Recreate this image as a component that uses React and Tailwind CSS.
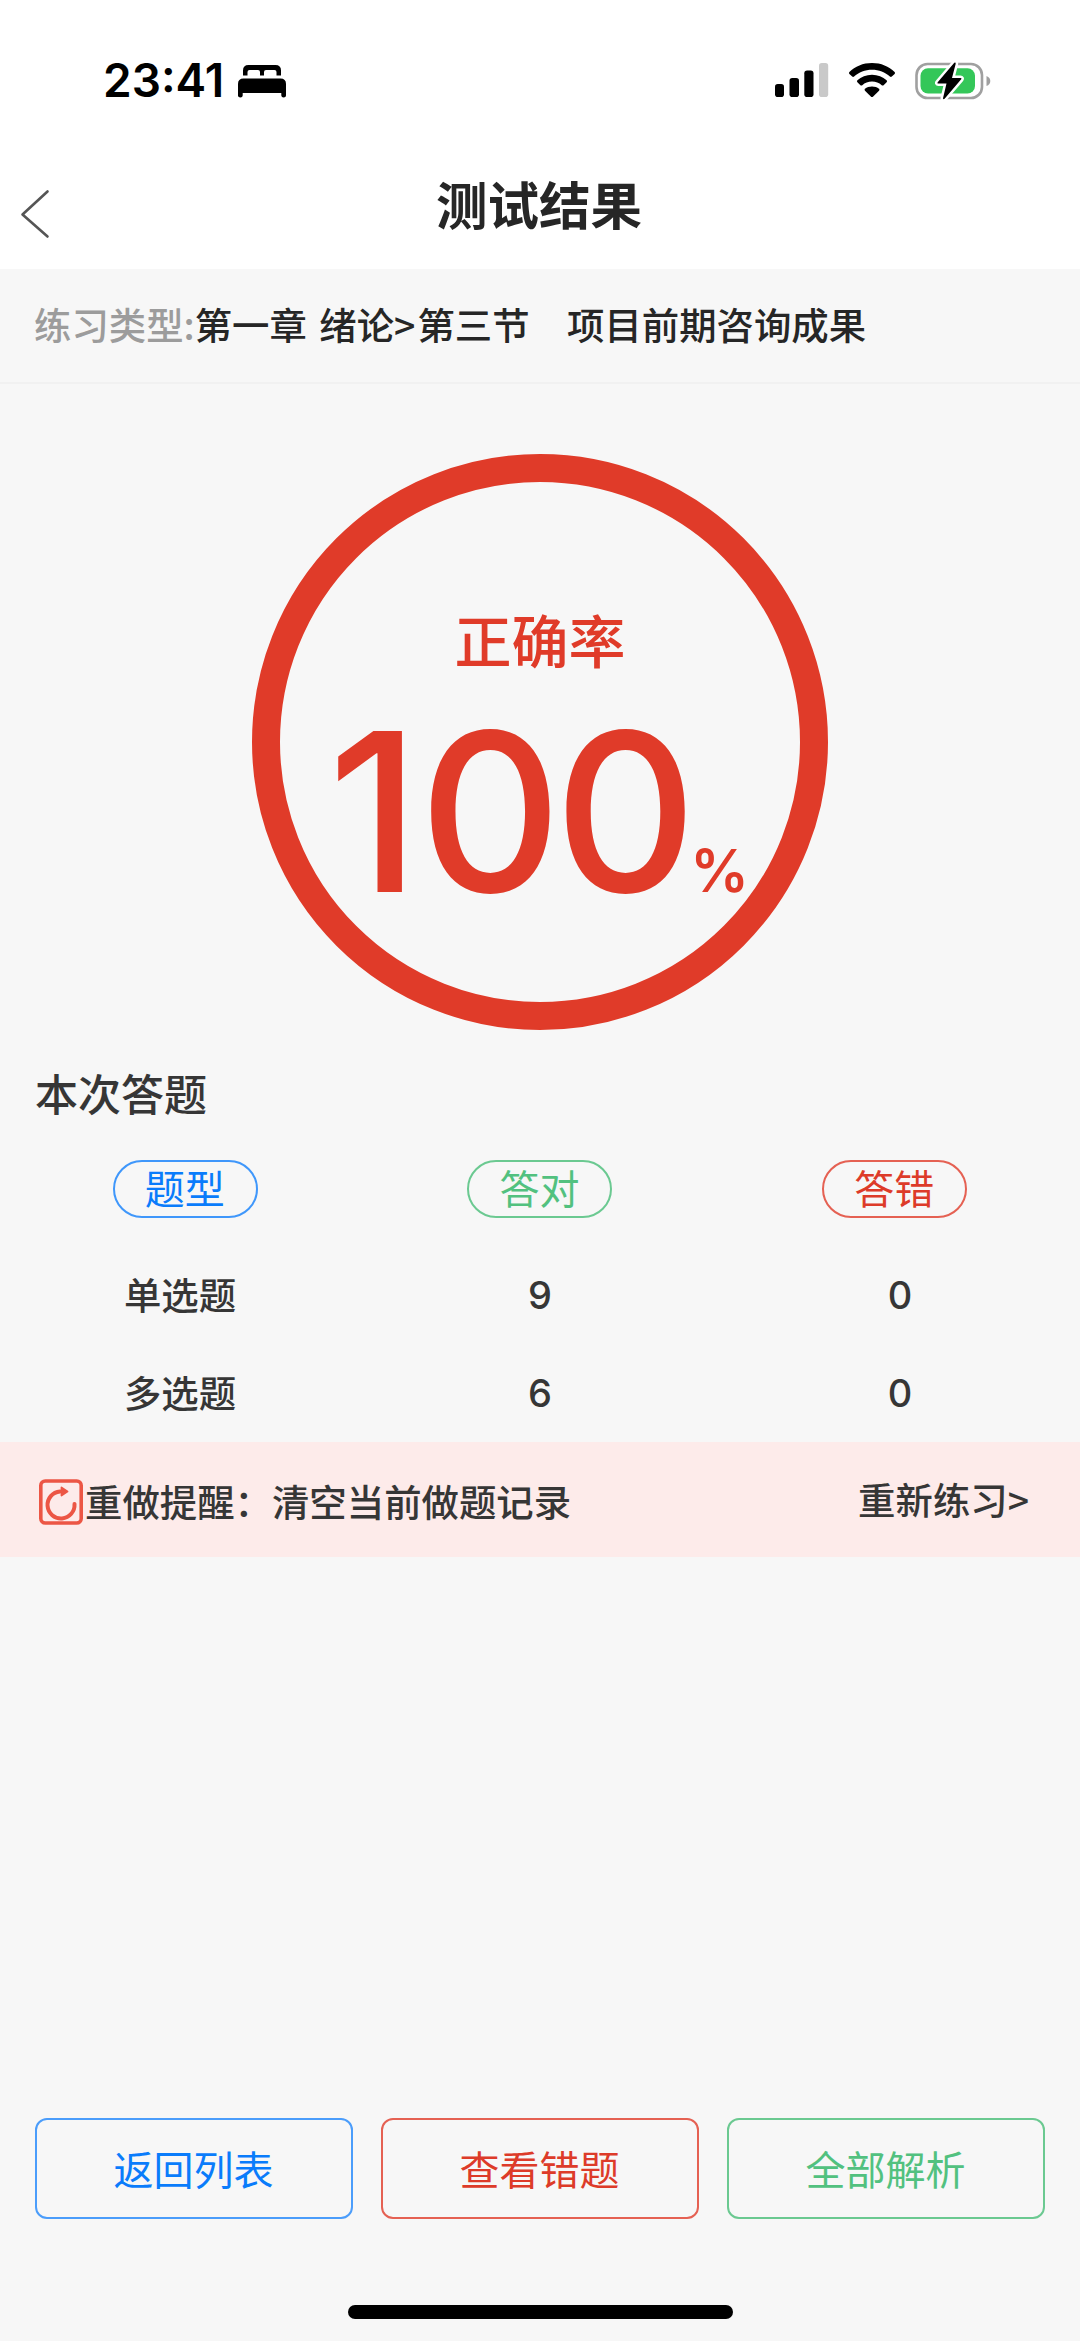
const PILLS = [
  { label: '题型', className: 'border-[#1f86fb]/85 text-[#0a7cfb]' },
  { label: '答对', className: 'border-[#52c17f]/85 text-[#52c17f]' },
  { label: '答错', className: 'border-[#e03b29]/80 text-[#dd3b29]' },
];

const ROWS = [
  { type: '单选题', right: 9, wrong: 0 },
  { type: '多选题', right: 6, wrong: 0 },
];

const ACTIONS = [
  { label: '返回列表', className: 'border-[#1f86fb]/80 text-[#0a7cfb]' },
  { label: '查看错题', className: 'border-[#e03b29]/80 text-[#dd3b29]' },
  { label: '全部解析', className: 'border-[#52c17f]/85 text-[#52c17f]' },
];

const BedIcon = () => (
  <svg width="48" height="33" viewBox="0 0 48 33" fill="#000">
    <path d="M5 10.5V5.500Q5 0 10.500 0H37.500Q43 0 43 5.500V10.500H38.500V7Q38.500 5 36.500 5H28Q26 5 26 7V10.500H22V7Q22 5 20 5H11.500Q9.500 5 9.500 7V10.500Z" />
    <path d="M0 19Q0 13.500 5.500 13.500H42.500Q48 13.500 48 19V30.500Q48 32.500 45.700 32.500T43.300 30.500V28H4.700V30.500Q4.700 32.500 2.300 32.500T0 30.500Z" />
  </svg>
);

const SignalIcon = () => (
  <svg width="54" height="34" viewBox="0 0 54 34">
    <rect x="0" y="21" width="9" height="13" rx="2.800" />
    <rect x="14.500" y="15" width="9.500" height="19" rx="2.800" />
    <rect x="29.300" y="7.500" width="9.200" height="26.500" rx="2.800" />
    <rect x="44" y="0" width="9.200" height="34" rx="2.800" fill="#c9c9c9" />
  </svg>
);

const WifiIcon = () => (
  <svg width="48" height="35" viewBox="0 0 48 35">
    <path d="M24 0C33 0 41 3.400 46.600 8.900Q47.600 9.900 46.600 10.900L43.800 13.600Q42.900 14.500 41.900 13.600C37.200 9.400 30.900 6.800 24 6.800S10.800 9.400 6.100 13.600Q5.100 14.500 4.200 13.600L1.400 10.900Q.4 9.900 1.400 8.900C7 3.400 15 0 24 0Z" />
    <path d="M24 11.800C29.800 11.800 34.800 13.900 38.600 17.300Q39.600 18.300 38.600 19.300L35.600 22.200Q34.700 23 33.700 22.200C31.100 20 27.800 18.600 24 18.600S16.900 20 14.300 22.200Q13.300 23 12.400 22.200L9.400 19.300Q8.400 18.300 9.400 17.300C13.200 13.900 18.200 11.800 24 11.800Z" />
    <path d="M24 23.500C26.800 23.500 29.200 24.400 31 25.800Q32 26.700 31 27.700L25.200 33.500Q24 34.600 22.800 33.500L17 27.700Q16 26.700 17 25.800C18.800 24.400 21.200 23.500 24 23.500Z" />
  </svg>
);

const BOLT = 'M39.300 .8 22.700 20.300Q22 21.500 23.300 21.500H31.500L28 36.200Q28.200 37.800 29.600 36.700L46.200 17.300Q47 16 45.500 16H37L40.700 1.800Q40.700 -.1 39.300 .8Z';

const BatteryIcon = () => (
  <svg width="76" height="39" viewBox="0 0 76 39">
    <rect x="1.500" y="2" width="65.500" height="34" rx="11" fill="none" stroke="#a0a0a0" strokeWidth="2.600" />
    <rect x="5.500" y="6.200" width="54.500" height="25.300" rx="7.500" fill="#34c759" />
    <path d="M71.500 14Q75.300 15.500 75.300 19T71.500 24Z" fill="#a0a0a0" />
    <path d={BOLT} fill="#fff" stroke="#fff" strokeWidth="5" strokeLinejoin="round" />
    <path d={BOLT} />
  </svg>
);

const RedoIcon = () => (
  <svg className="mt-[2px]" width="44" height="46" viewBox="0 0 44 46" fill="none" stroke="#ec5645">
    <rect x="1.800" y="2" width="40.400" height="42" rx="4.500" strokeWidth="3.600" />
    <path d="M21 12.500A13.500 13.500 0 1 0 35.500 25" strokeWidth="4" strokeLinecap="round" />
    <path d="M22.500 8.500 28.500 12.500 22.500 16.500Z" fill="#ec5645" strokeWidth="1.800" strokeLinejoin="round" />
  </svg>
);

const StatusBar = () => (
  <div className="flex h-[160px] items-start justify-between pl-[103px] pr-[89px] pt-[62px]">
    <div className="flex items-start">
      <span className="h-[36px] w-[135px] font-['Inter',sans-serif] text-[46px] font-semibold leading-[36px] text-black">23:41</span>
      <div className="pt-[3px]"><BedIcon /></div>
    </div>
    <div className="flex items-start">
      <div className="mr-[19px] pt-px"><SignalIcon /></div>
      <div className="mr-[19px] pt-px"><WifiIcon /></div>
      <BatteryIcon />
    </div>
  </div>
);

export default function App() {
  return (
    <div className="flex h-[2341px] w-[1080px] flex-col overflow-hidden bg-[#f7f7f7] font-['Noto_Sans_CJK_SC',sans-serif] text-[37.400px] text-[#363636]">
      <header className="h-[269px] shrink-0 bg-white">
        <StatusBar />
        <div className="grid h-[90px] grid-cols-[1fr_auto_1fr] items-center">
          <svg className="ml-[20px] mt-[17px]" width="30" height="50" viewBox="0 0 30 50" fill="none" stroke="#555" strokeWidth="2.600" strokeLinecap="round" strokeLinejoin="round">
            <path d="M27.500 2.500 2.500 25.500 27.500 47.500" />
          </svg>
          <h1 className="pb-[4px] pr-[2px] text-[51.500px] font-bold leading-[86px] text-[#262626]">测试结果</h1>
        </div>
      </header>

      {/* Practice type */}
      <div className="flex h-[115px] shrink-0 items-center whitespace-pre border-b-2 border-[#f1f1f1] pb-[3px] pl-[34px] font-medium text-[#262626]">
        <span className="text-[#9c9c9c]">练习类型:</span>
        <span className="[word-spacing:4px]">第一章 绪论<span className="mr-[2px]">&gt;</span>第三节　项目前期咨询成果</span>
      </div>

      {/* Accuracy ring */}
      <div className="mt-[70px] flex h-[576px] w-[576px] shrink-0 flex-col self-center rounded-full border-[28px] border-[#e03b29] pt-[116px] text-[#e03b29]">
        <p className="text-center text-[57px] font-medium leading-[80px]">正确率</p>
        <div className="mt-[29px] flex items-baseline pl-[48px] font-['Inter',sans-serif] font-medium">
          <span className="w-[91px] text-[221px] leading-[210px]">1</span>
          <span className="text-[221px] leading-[210px] tracking-[-7.500px]">00</span>
          <span className="ml-px text-[58.500px] font-semibold">%</span>
        </div>
      </div>

      {/* Answer summary */}
      <h2 className="mt-[30px] shrink-0 pl-[35px] text-[43px] font-medium leading-[64px]">本次答题</h2>
      <div className="mt-[36px] grid shrink-0 grid-cols-3 px-[8px]">
        {PILLS.map((pill) => (
          <div key={pill.label} className="flex justify-center">
            <span className={`h-[58px] w-[145px] rounded-full border-2 pr-px text-center text-[40px] leading-[51px] ${pill.className}`}>{pill.label}</span>
          </div>
        ))}
      </div>
      <div className="mt-[28px] shrink-0">
        {ROWS.map((row) => (
          <div key={row.type} className="grid h-[98px] grid-cols-3 items-center text-center font-medium">
            <span className="pb-[2px]">{row.type}</span>
            <span className="font-['Inter',sans-serif] text-[38px]">{row.right}</span>
            <span className="font-['Inter',sans-serif] text-[38px]">{row.wrong}</span>
          </div>
        ))}
      </div>

      {/* Redo reminder */}
      <div className="flex h-[115px] shrink-0 items-center bg-[#fdebea] pl-[39px] pr-[51px] pt-[3px] font-medium">
        <RedoIcon />
        <span className="ml-[2px]">重做提醒：清空当前做题记录</span>
        <span className="mb-[4px] ml-auto">重新练习&gt;</span>
      </div>

      {/* Actions */}
      <div className="mt-auto grid shrink-0 grid-cols-3 gap-[28px] px-[35px]">
        {ACTIONS.map((action) => (
          <button key={action.label} className={`h-[101px] rounded-[12px] border-2 pr-px text-[40px] leading-[97px] ${action.className}`}>
            {action.label}
          </button>
        ))}
      </div>
      <div className="mb-[22px] mt-[86px] h-[14px] w-[385px] shrink-0 self-center rounded-full bg-black" />
    </div>
  );
}
